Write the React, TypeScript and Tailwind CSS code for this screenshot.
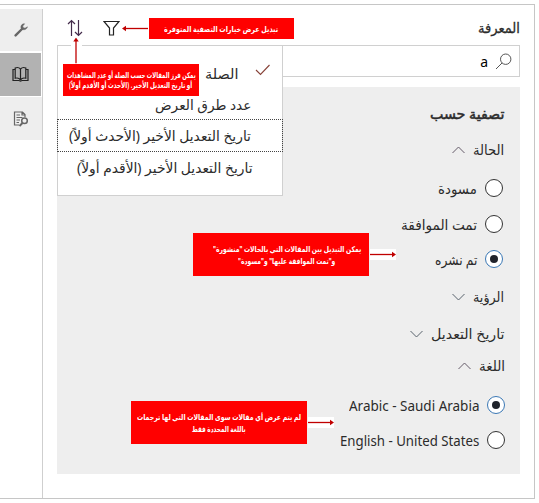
import { useLayoutEffect, useRef, useState } from "react";
import type { ReactNode } from "react";

type TextProps = { children: ReactNode; w: number; className?: string; dir?: "rtl" | "ltr" };

// Single line of text condensed or widened to an exact column width.
function FitText({ children, w, className = "", dir = "rtl" }: TextProps) {
  const ref = useRef<HTMLSpanElement>(null);
  const [scale, setScale] = useState(1);
  useLayoutEffect(() => {
    if (ref.current) setScale(w / ref.current.offsetWidth);
  }, [w]);
  return (
    <span dir={dir} className={`flex shrink-0 justify-start whitespace-nowrap ${className}`} style={{ width: w }}>
      <span
        ref={ref}
        className={`inline-block shrink-0 ${dir === "rtl" ? "origin-right" : "origin-left"}`}
        style={{ transform: `scaleX(${scale})` }}
      >
        {children}
      </span>
    </span>
  );
}

function Chevron({ up = false }: { up?: boolean }) {
  return (
    <svg width="13" height="8" viewBox="0 0 13 8" fill="none" stroke={up ? "#655b68" : "#59636d"} strokeWidth="1">
      <path d={up ? "M.5 7 6.5 1l6 6" : "M.5 1l6 6 6-6"} />
    </svg>
  );
}

function Section({ label, w, up, className = "" }: { label: string; w: number; up?: boolean; className?: string }) {
  return (
    <div className={`flex h-6 items-center gap-2 ${className}`}>
      <FitText w={w} className="pb-[2px] text-[14px]">{label}</FitText>
      <Chevron up={up} />
    </div>
  );
}

function Option({ label, w, checked, ltr, className = "" }: { label: string; w: number; checked?: boolean; ltr?: boolean; className?: string }) {
  return (
    <div className={`flex h-6 items-center gap-[8px] ${className}`}>
      <span className={`flex size-[18px] shrink-0 items-center justify-center rounded-full border bg-white ${checked ? "border-[#3b78b5]" : "border-[#333]"}`}>
        {checked && <span className="size-2 rounded-full bg-[#20232b]" />}
      </span>
      <FitText w={w} dir={ltr ? "ltr" : "rtl"} className="text-[14px]">{label}</FitText>
    </div>
  );
}

function Callout({ lines, className }: { lines: [string, number][]; className: string }) {
  return (
    <div className={`absolute flex flex-col items-center justify-center bg-[#ff0000] text-[8px] font-bold text-white ${className}`}>
      {lines.map(([text, w]) => (
        <FitText key={text} w={w}>{text}</FitText>
      ))}
    </div>
  );
}

function Arrow({ className }: { className: string }) {
  return (
    <svg className={`absolute ${className}`} width="26" height="11" viewBox="0 0 26 11">
      <path d="M0 5.5h23" stroke="#c00000" strokeWidth="1.3" />
      <path d="M22 2.8 26 5.5 22 8.2z" fill="#c00000" />
    </svg>
  );
}

export default function App() {
  return (
    <div className="relative h-[503px] w-[539px] overflow-hidden bg-white pt-1 font-['Noto_Sans','DejaVu_Sans',sans-serif] text-[#2b2b2b]">
      <div className="flex h-[495px] w-[535px] border-y border-r border-[#c6c6c6]">
        <nav className="mt-1 flex w-[43px] shrink-0 flex-col border-r border-[#cfcfcf] bg-white">
          <div className="flex h-[42px] items-center justify-center bg-[#eee]">
            <svg width="14" height="14" viewBox="0 0 14 14" fill="none" stroke="#666">
              <path d="M1.6 12.4 8 6" strokeWidth="2.400" strokeLinecap="round" />
              <path d="M10.600.8C8 .6 6.400 2.800 7 5c.8 2.300 5.400 2.700 6.500-1.200L11 5.200 9 4.500 8.800 3z" fill="#666" strokeWidth=".5" />
            </svg>
          </div>
          <div className="mt-[2px] mr-px flex h-[43px] items-center justify-center bg-[#b2b2b2]">
            <svg width="17" height="17" viewBox="0 0 17 17" fill="none" stroke="#222" strokeWidth="1.2">
              <path d="M8.5 3v11.5M8.5 3C7 1.4 4.8 1.3 3.2 2v10.3c2-.6 4-.2 5.3 1.5M8.5 3C10 1.4 12.200 1.300 13.800 2v10.300c-2-.6-4-.2-5.300 1.500" />
              <path d="M3 3.500H1V14.500h6l1.500.7 1.500-.7h6v-11h-2" />
            </svg>
          </div>
          <div className="mt-px flex h-[43px] items-center justify-center bg-[#eee]">
            <svg width="16" height="16" viewBox="0 0 16 16" fill="none" stroke="#666" strokeWidth="1.2">
              <path d="M12 6V3.500L9.500 1h-8v13H6M9 1v3h3M3.500 4H7M3.500 6.500h6M3.500 9H7M3.500 11.500H6" />
              <circle cx="11.500" cy="9.800" r="2.800" strokeWidth="1.500" />
              <path d="m9.500 12-3 3" strokeWidth="2" />
            </svg>
          </div>
        </nav>

        <main className="flex min-w-0 flex-1 flex-col pl-[14px] pr-[14px]">
          <header dir="rtl" className="flex h-10 items-center justify-between pt-[6px]">
            <FitText w={42} className="pb-[2px] text-[14px] [-webkit-text-stroke:0.3px_#2b2b2b]">المعرفة</FitText>
            <div dir="ltr" className="flex min-w-0 flex-1 items-center gap-5 pl-[10px]">
              <svg width="16" height="18" viewBox="0 0 16 18" fill="none" stroke="#432b4b" strokeWidth="1.200">
                <path d="M4.500 17V1.500M1 5l3.500-3.500L8 5M11.500 1v15.500M8 13l3.500 3.500L15 13" />
              </svg>
              <svg width="17" height="16" viewBox="0 0 17 16" fill="none" stroke="#222" strokeWidth="1.200">
                <path d="M1 1.500h15L10.500 8v7h-4V8z" />
              </svg>
            </div>
          </header>

          <div dir="rtl" className="flex h-8 shrink-0 items-center gap-[7px] border border-[#d0d0d0] bg-white pr-[7px] text-[14px]">
            <svg width="17" height="17" viewBox="0 0 17 17" fill="none" stroke="#555" strokeWidth="1">
              <circle cx="10.700" cy="6.200" r="5.200" />
              <path d="M7 10 1 16" />
            </svg>
            <span className="text-black">a</span>
          </div>

          <section dir="rtl" className="mt-[10px] flex h-[387px] shrink-0 flex-col bg-[#eee] pr-[16px] pt-[15px]">
            <FitText w={74} className="h-6 items-center pb-[2px] text-[14px] [-webkit-text-stroke:0.5px_#2b2b2b]">تصفية حسب</FitText>
            <Section label="الحالة" w={31} up className="mt-3" />
            <Option label="مسودة" w={39} className="mr-px mt-[14px]" />
            <Option label="تمت الموافقة" w={76} className="mr-px mt-3" />
            <Option label="تم نشره" w={42} checked className="mr-px mt-[11px]" />
            <Section label="الرؤية" w={31} className="mt-[14px]" />
            <Section label="تاريخ التعديل" w={73} className="mt-[13px]" />
            <Section label="اللغة" w={26} up className="-mr-[1px] mt-2" />
            <Option label="Arabic - Saudi Arabia" w={130} checked ltr className="-mr-px mt-[15px]" />
            <Option label="English - United States" w={139} ltr className="-mr-px mt-[11px]" />
          </section>
        </main>
      </div>

      <div dir="rtl" className="absolute left-[57px] top-[45px] flex h-[151px] w-[226px] flex-col border border-[#d0d0d0] bg-white pt-[12px] text-[14px]">
        <div className="flex h-[31px] items-center gap-[17px] pr-3">
          <svg className="-mt-2" width="15" height="12" viewBox="0 0 15 12" fill="none" stroke="#874238" strokeWidth="1.100">
            <path d="m1 6 4.500 4.500L14.500 1" />
          </svg>
          <FitText w={33} className="pb-px">الصلة</FitText>
        </div>
        <div className="flex h-[30px] items-center pr-[30px]"><FitText w={97}>عدد طرق العرض</FitText></div>
        <div className="-mx-px flex h-[33px] shrink-0 items-center border border-dotted border-[#444] pr-[31px]"><FitText w={182} className="pb-px">تاريخ التعديل الأخير (الأحدث أولاً)</FitText></div>
        <div className="flex h-[31px] items-center pr-[30px]"><FitText w={176} className="pb-px">تاريخ التعديل الأخير (الأقدم أولاً)</FitText></div>
      </div>

      <Callout className="left-[149px] top-[18px] h-[21px] w-[145px]" lines={[["تبديل عرض خيارات التصفية المتوفرة", 114]]} />
      <Arrow className="left-[122px] top-[23px] rotate-180" />
      <div className="absolute left-[71px] top-[38px] flex h-[26px] w-[11px] items-center justify-center bg-white">
        <Arrow className="left-[-8px] top-[7px] -rotate-90" />
      </div>
      <Callout className="left-[63px] top-[64px] h-[32px] w-[136px] leading-[10px]" lines={[["يمكن فرز المقالات حسب الصلة أو عدد المشاهدات", 129], ["أو تاريخ التعديل الأخير. (الأحدث أو الأقدم أولاً)", 123]]} />
      <Callout className="left-[193px] top-[233px] h-[43px] w-[176px] pl-4 pr-1 leading-[12px]" lines={[["يمكن التبديل بين المقالات التي بالحالات \"منشورة\"", 148], ["و\"تمت الموافقة عليها\" و\"مسودة\"", 97]]} />
      <Arrow className="left-[370px] top-[249px] bg-white" />
      <Callout className="left-[131px] top-[401px] h-[43px] w-[176px] leading-[12px]" lines={[["لم يتم عرض أي مقالات سوى المقالات التي لها ترجمات", 164], ["باللغة المحددة فقط", 54]]} />
      <Arrow className="left-[308px] top-[417px] bg-white" />
    </div>
  );
}
